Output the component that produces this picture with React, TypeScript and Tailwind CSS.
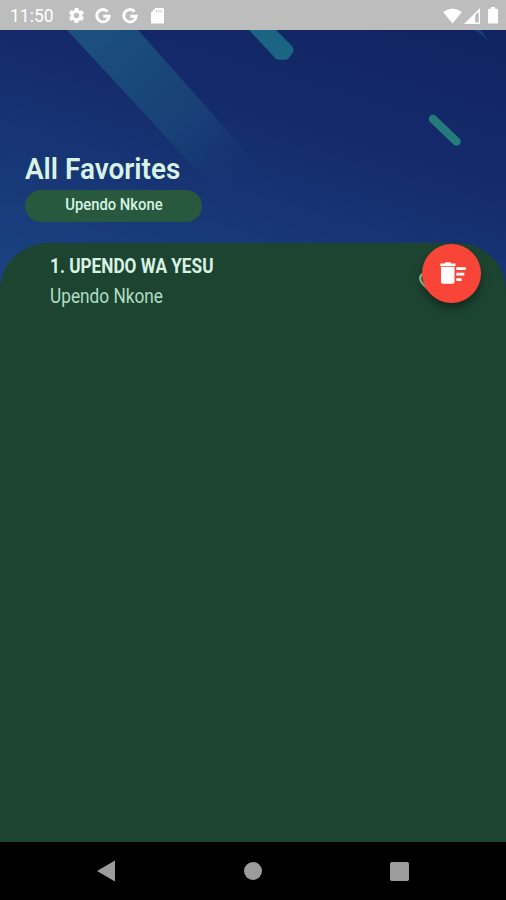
import { MdFavoriteBorder, MdSettings } from "react-icons/md";

const favorites = [{ title: "UPENDO WA YESU", artist: "Upendo Nkone" }];

function GoogleIcon() {
  return (
    <svg width="16" height="16" viewBox="0 0 16 16" fill="none" stroke="white" strokeWidth="2.9">
      <path d="M12.7 3.6A6.2 6.2 0 1 0 14.2 8.2H8.2" />
    </svg>
  );
}

function SdCardIcon() {
  return (
    <svg width="13" height="16" viewBox="0 0 13 16">
      <path
        fill="white"
        fillRule="evenodd"
        d="M4.6 0H11.6Q13 0 13 1.4V14.4Q13 15.6 11.8 15.6H1.3Q0 15.6 0 14.4V4.8ZM4.9 2V4.200H5.9V2ZM7.3 2V4.200H8.3V2ZM9.7 2V4.200H10.700V2Z"
      />
    </svg>
  );
}

function ClearListIcon() {
  return (
    <svg width="26" height="22" viewBox="0 0 26 22" fill="white">
      <path d="M0.300 1.6H4.600L5.500 0.300H10.200L11.100 1.6H15.500V4.200H0.300Z" />
      <path d="M1 5H14.500V19.800Q14.500 21.800 12.500 21.800H3Q1 21.800 1 19.800Z" />
      <path d="M16.300 5.300H25.800V8.100H16.300ZM16.300 10.800H24.300V13.500H16.300ZM16.300 16.200H21.600V19H16.300Z" />
    </svg>
  );
}

function StatusBar() {
  return (
    <div className="flex h-[30px] shrink-0 items-center justify-between bg-[#bdbdbd] pr-2 pl-[10px] text-white">
      <div className="flex items-center pt-px">
        <span className="w-[57px] pt-[2px] text-[17.5px] leading-none whitespace-nowrap">11:50</span>
        <MdSettings size={19} className="mr-[9px]" />
        <GoogleIcon />
        <span className="w-[11px]" />
        <GoogleIcon />
        <span className="w-[13px]" />
        <SdCardIcon />
      </div>
      <div className="flex items-center pt-px">
        <svg width="19" height="16" viewBox="0 0 19 16">
          <path fill="white" d="M9.5 15.5 0 4Q9.5-3.2 19 4Z" />
        </svg>
        <svg width="16" height="16" viewBox="0 0 16 16" className="ml-[2px]">
          <path fill="white" fillRule="evenodd" d="M16 0V16H0ZM14.7 3.4 11.2 7V14.6H14.7Z" />
        </svg>
        <svg width="10" height="17" viewBox="0 0 10 17" className="ml-2">
          <path
            fill="white"
            d="M3 0H7V1.8H8.8Q10 1.8 10 3V15.4Q10 16.6 8.8 16.6H1.2Q0 16.6 0 15.4V3Q0 1.8 1.2 1.8H3Z"
          />
        </svg>
      </div>
    </div>
  );
}

// Diagonal light streaks behind the header
function Backdrop() {
  return (
    <svg className="absolute inset-0" width="506" height="270" viewBox="0 30 506 270">
      <defs>
        <linearGradient id="sky" gradientUnits="userSpaceOnUse" x1="370" y1="20" x2="280" y2="330">
          <stop offset="0" stopColor="#122563" />
          <stop offset="0.35" stopColor="#142a6a" />
          <stop offset="1" stopColor="#1a407f" />
        </linearGradient>
        <linearGradient id="streak" gradientUnits="userSpaceOnUse" x1="100" y1="30" x2="235" y2="185">
          <stop offset="0" stopColor="#1b507d" />
          <stop offset="0.6" stopColor="#194478" stopOpacity="0.85" />
          <stop offset="1" stopColor="#193d78" stopOpacity="0" />
        </linearGradient>
      </defs>
      <rect y="30" width="506" height="270" fill="url(#sky)" />
      <path d="M67 30H138L280 190H215Z" fill="url(#streak)" />
      <path d="M249 30H276L292 46Q295 50 292 54L288 59Q282 61 276 59Z" fill="#1c6483" />
      <path d="M433 119 456.500 141.500" stroke="#237b7b" strokeWidth="8.500" strokeLinecap="round" />
      <path d="M475 30H481L488 40Z" fill="#164074" />
    </svg>
  );
}

function NavBar() {
  return (
    <div className="flex h-[58px] shrink-0 items-center justify-between bg-black pr-[97px] pl-[97px]">
      <svg width="18" height="22" viewBox="0 0 18 22">
        <path fill="#9c9c9c" d="M18 .5V21.500L0 11Z" />
      </svg>
      <span className="size-[18px] rounded-full bg-[#9c9c9c]" />
      <span className="size-[19px] rounded-[2px] bg-[#9c9c9c]" />
    </div>
  );
}

export default function App() {
  return (
    <div className="flex h-[900px] w-[506px] flex-col overflow-hidden bg-[#1d4431] font-['Roboto',sans-serif]">
      <StatusBar />
      <main className="relative flex flex-1 flex-col">
        <Backdrop />
        <header className="relative flex h-[213px] flex-col items-start pt-[122px] pl-[25px]">
          <h1 className="origin-left scale-x-[0.93] text-[30px] leading-[34px] font-semibold whitespace-nowrap text-[#d8f3e3]">
            All Favorites
          </h1>
          <div className="mt-[4px] flex h-[32px] w-[177px] items-center justify-center rounded-full bg-[#28583e] pb-[4px]">
            <span className="scale-x-[0.87] text-[17px] leading-5 font-medium whitespace-nowrap text-[#d8f3e3]">
              Upendo Nkone
            </span>
          </div>
        </header>

        <section className="relative flex-1 rounded-t-[48px] bg-[#1d4431] pl-[50px]">
          {favorites.map((song, index) => (
            <div key={song.title} className="pt-[11px]">
              <h2 className="w-max origin-left scale-x-[0.86] text-[20px] leading-6 font-bold text-[#d8f3e3]">
                {index + 1}. {song.title}
              </h2>
              <p className="mt-[7px] w-max origin-left scale-x-[0.885] text-[19.5px] leading-6 text-[#b0dec4]">
                {song.artist}
              </p>
            </div>
          ))}
          <MdFavoriteBorder size={26} className="absolute top-[26px] left-[417px] text-[#a9c99f]" />
          <button
            aria-label="Clear favorites"
            className="absolute top-[0.5px] right-[25px] flex size-[59px] items-center justify-center rounded-full bg-[#f84538] pl-[3px] text-white shadow-[0_5px_8px_rgba(0,0,0,0.4)]"
          >
            <ClearListIcon />
          </button>
        </section>
      </main>
      <NavBar />
    </div>
  );
}
